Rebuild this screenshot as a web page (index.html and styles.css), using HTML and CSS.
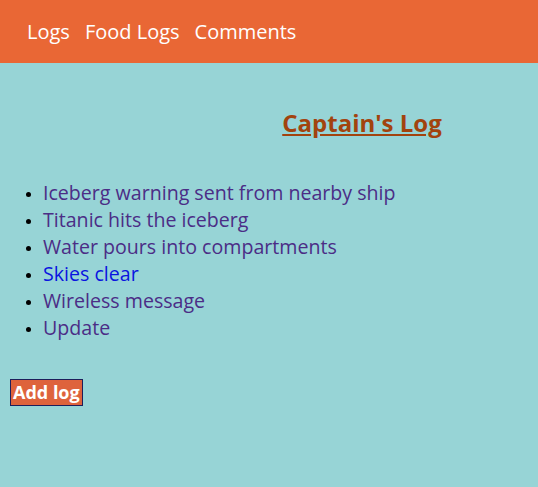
FILE: index.html
```html
<!DOCTYPE html>
<html>
<head>
<meta charset="utf-8">
<link rel="stylesheet" href="styles.css">
</head>
<body>
<nav class="topbar">
  <a class="nav-link" href="#logs">Logs</a>
  <a class="nav-link" href="#food">Food Logs</a>
  <a class="nav-link" href="#comments">Comments</a>
</nav>
<main class="content">
  <h1 class="title"><a href="#">Captain's Log</a></h1>
  <ul class="log-list">
    <li><a class="visited" href="#1">Iceberg warning sent from nearby ship</a></li>
    <li><a class="visited" href="#2">Titanic hits the iceberg</a></li>
    <li><a class="visited" href="#3">Water pours into compartments</a></li>
    <li><a class="fresh" href="#4">Skies clear</a></li>
    <li><a class="visited" href="#5">Wireless message</a></li>
    <li><a class="visited" href="#6">Update</a></li>
  </ul>
  <button class="add-btn">Add log</button>
</main>
</body>
</html>
```
FILE: styles.css
```css
html, body {
  margin: 0;
  padding: 0;
  background: #97d4d6;
  font-family: "Open Sans", sans-serif;
  height: 100%;
}
.topbar {
  background: #e96735;
  height: 63px;
  display: flex;
  align-items: center;
  gap: 15px;
  padding: 0 0 0 27px;
  box-sizing: border-box;
}
.nav-link {
  color: #fff;
  text-decoration: none;
  font-size: 20px;
}
.content {
  padding: 40px 10px 0 10px;
}
.title {
  margin: 0;
  text-align: center;
  padding-left: 186px;
  font-size: 24px;
  font-weight: 700;
  line-height: 40px;
}
.title a {
  color: #a2430e;
}
.log-list {
  margin: 36px 0 0 0;
  padding-left: 33px;
  font-size: 19.6px;
  line-height: 27px;
}
.log-list li::marker {
  font-size: 14px;
}
.log-list a {
  text-decoration: none;
}
.visited { color: #4b2d86; }
.fresh { color: #0a14e0; }
.add-btn {
  display: block;
  margin-top: 38px;
  background: #de633c;
  color: #fff;
  border: 1px solid #1e1e5a;
  font-family: "Open Sans", sans-serif;
  font-weight: 700;
  font-size: 18px;
  padding: 0 2px 1px;
  line-height: 24px;
  height: 27px;
}
```
